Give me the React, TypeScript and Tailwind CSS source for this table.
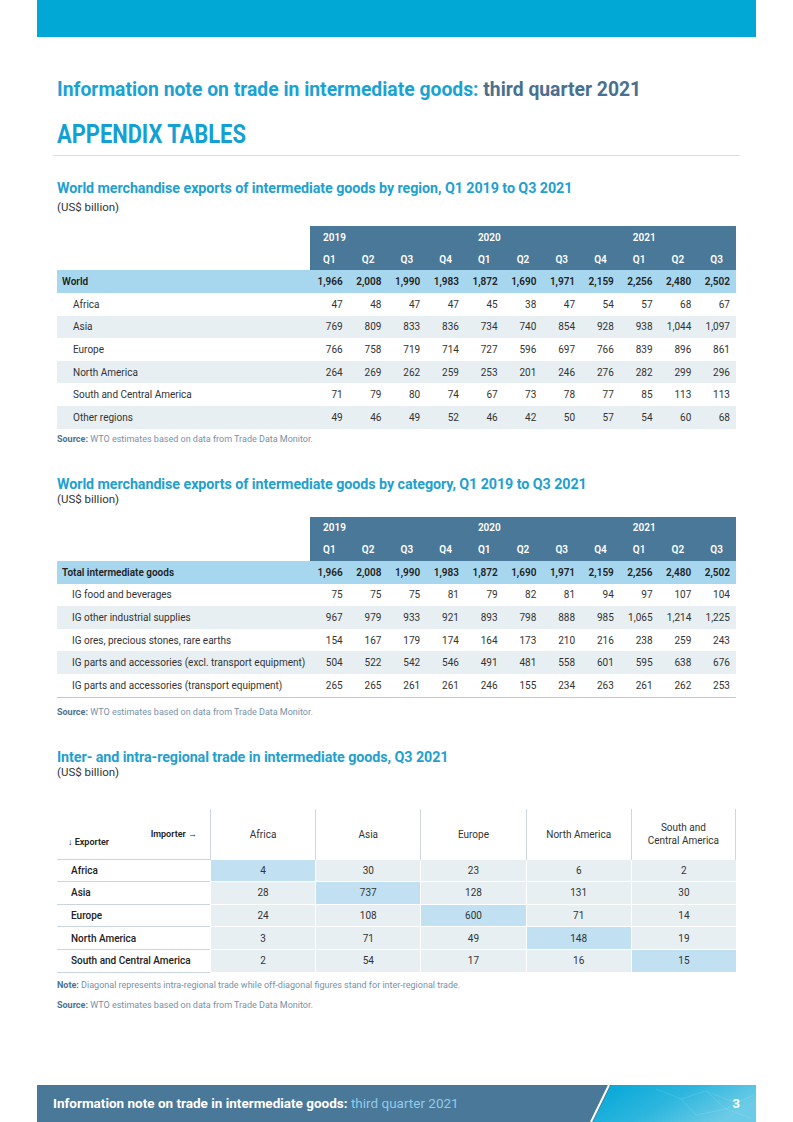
const q = ['Q1', 'Q2', 'Q3', 'Q4', 'Q1', 'Q2', 'Q3', 'Q4', 'Q1', 'Q2', 'Q3'];

const regionRows: [string, string[]][] = [
  ['Africa', ['47', '48', '47', '47', '45', '38', '47', '54', '57', '68', '67']],
  ['Asia', ['769', '809', '833', '836', '734', '740', '854', '928', '938', '1,044', '1,097']],
  ['Europe', ['766', '758', '719', '714', '727', '596', '697', '766', '839', '896', '861']],
  ['North America', ['264', '269', '262', '259', '253', '201', '246', '276', '282', '299', '296']],
  ['South and Central America', ['71', '79', '80', '74', '67', '73', '78', '77', '85', '113', '113']],
  ['Other regions', ['49', '46', '49', '52', '46', '42', '50', '57', '54', '60', '68']],
];

const categoryRows: [string, string[]][] = [
  ['IG food and beverages', ['75', '75', '75', '81', '79', '82', '81', '94', '97', '107', '104']],
  ['IG other industrial supplies', ['967', '979', '933', '921', '893', '798', '888', '985', '1,065', '1,214', '1,225']],
  ['IG ores, precious stones, rare earths', ['154', '167', '179', '174', '164', '173', '210', '216', '238', '259', '243']],
  ['IG parts and accessories (excl. transport equipment)', ['504', '522', '542', '546', '491', '481', '558', '601', '595', '638', '676']],
  ['IG parts and accessories (transport equipment)', ['265', '265', '261', '261', '246', '155', '234', '263', '261', '262', '253']],
];

const totals = ['1,966', '2,008', '1,990', '1,983', '1,872', '1,690', '1,971', '2,159', '2,256', '2,480', '2,502'];

const matrixCols = ['Africa', 'Asia', 'Europe', 'North America', 'South and Central America'];
const matrixRows: [string, string[]][] = [
  ['Africa', ['4', '30', '23', '6', '2']],
  ['Asia', ['28', '737', '128', '131', '30']],
  ['Europe', ['24', '108', '600', '71', '14']],
  ['North America', ['3', '71', '49', '148', '19']],
  ['South and Central America', ['2', '54', '17', '16', '15']],
];

function SectionTitle({ title, gap }: { title: string; gap: string }) {
  return (
    <div>
      <h3 className="text-[14.3px] leading-[18px] font-bold tracking-[-0.005em] text-[#1f9fd2]">{title}</h3>
      <p className={`${gap} text-[11.5px] leading-[15px] text-[#333]`}>(US$ billion)</p>
    </div>
  );
}

function Source({ note }: { note?: boolean }) {
  return (
    <p className="text-[9px] leading-[12px] text-[#7592aa]">
      <span className="font-bold text-[#4b7393]">{note ? 'Note:' : 'Source:'}</span>{' '}
      {note
        ? 'Diagonal represents intra-regional trade while off-diagonal figures stand for inter-regional trade.'
        : 'WTO estimates based on data from Trade Data Monitor.'}
    </p>
  );
}

function QuarterTable({
  totalLabel,
  rows,
  indent,
  bottomLine,
}: {
  totalLabel: string;
  rows: [string, string[]][];
  indent: string;
  bottomLine?: boolean;
}) {
  const grid = 'grid grid-cols-[253px_repeat(11,1fr)]';
  return (
    <div className={`text-[10px] text-[#333] ${bottomLine ? 'border-b border-[#b9cad6]' : ''}`}>
      {/* header */}
      <div className={`${grid} h-[22px] items-center`}>
        <div />
        <div className="col-span-4 h-full bg-[#4a7898] pl-[13px] flex items-center font-semibold text-white">2019</div>
        <div className="col-span-4 h-full bg-[#4a7898] pl-[13px] flex items-center font-semibold text-white">2020</div>
        <div className="col-span-3 h-full bg-[#4a7898] pl-[13px] flex items-center font-semibold text-white">2021</div>
      </div>
      <div className={`${grid} h-[22px]`}>
        <div />
        {q.map((x, i) => (
          <div key={i} className="bg-[#4a7898] flex items-center justify-center font-semibold text-white">
            {x}
          </div>
        ))}
      </div>
      <div className={`${grid} h-[23px] items-center bg-[#a7d7ee] font-semibold text-[#222]`}>
        <div className="pl-[5px]">{totalLabel}</div>
        {totals.map((v, i) => (
          <div key={i} className="text-right pr-[6px]">
            {v}
          </div>
        ))}
      </div>
      {rows.map(([label, vals], r) => (
        <div key={label} className={`${grid} h-[22.6px] items-center ${r % 2 === 1 ? 'bg-[#e8eff2]' : 'bg-white'}`}>
          <div className={indent}>{label}</div>
          {vals.map((v, i) => (
            <div key={i} className="text-right pr-[6px]">
              {v}
            </div>
          ))}
        </div>
      ))}
    </div>
  );
}

function MatrixTable() {
  const grid = 'grid grid-cols-[153px_repeat(5,1fr)]';
  return (
    <div className="text-[10px] text-[#333]">
      <div className={`${grid} h-[51px]`}>
        <div className="flex justify-between pl-[11px] pr-[13px] pt-[19px] border-b border-[#c9d5dc] font-semibold text-[9px] text-[#222]">
          <span className="mt-[8px]">↓ Exporter</span>
          <span>Importer →</span>
        </div>
        {matrixCols.map((c, i) => (
          <div
            key={c}
            className={`flex items-center justify-center text-center leading-[13px] px-[6px] border-l border-[#cdd7dd] ${
              i === matrixCols.length - 1 ? 'border-r' : ''
            }`}
          >
            {c === 'South and Central America' ? (
              <span>
                South and
                <br />
                Central America
              </span>
            ) : (
              c
            )}
          </div>
        ))}
      </div>
      {matrixRows.map(([label, vals], r) => (
        <div key={label} className={`${grid} h-[22.6px]`}>
          <div className="flex items-center pl-[14px] border-b border-[#c9d5dc] font-medium text-[#222]">{label}</div>
          {vals.map((v, i) => (
            <div
              key={i}
              className={`flex items-center justify-center border-l border-b border-white ${
                i === r ? 'bg-[#c1e1f2]' : 'bg-[#e8eff2]'
              }`}
            >
              {v}
            </div>
          ))}
        </div>
      ))}
    </div>
  );
}

export default function App() {
  return (
    <div className="w-[793px] h-[1122px] flex flex-col bg-white font-['Roboto',sans-serif]">
      <div className="mx-[37px] h-[37px] bg-[#01a8d6]" />

      <div className="px-[57px]">
        <h1 className="mt-[40px] h-[24px] text-[21px] leading-[24px] font-bold whitespace-nowrap">
          <span className="inline-block origin-left scale-x-[0.92] text-[#1aa2d4]">
            Information note on trade in intermediate goods: <span className="text-[#4a7090]">third quarter 2021</span>
          </span>
        </h1>
      </div>

      <div className="mx-[53px] mt-[20px] border-b border-[#c4e5f4] pb-[6px] pl-[4px]">
        <h2 className="h-[28px] text-[25px] leading-[28px] font-bold whitespace-nowrap">
          <span className="inline-block origin-left scale-x-[0.875] text-[#14a0d3]">APPENDIX TABLES</span>
        </h2>
      </div>

      <div className="px-[57px]">
        <div className="mt-[23px]">
          <SectionTitle gap="mt-[3px]" title="World merchandise exports of intermediate goods by region, Q1 2019 to Q3 2021" />
        </div>
        <div className="mt-[11px]">
          <QuarterTable totalLabel="World" rows={regionRows} indent="pl-[16px]" />
        </div>
        <div className="mt-[4px]">
          <Source />
        </div>

        <div className="mt-[30px]">
          <SectionTitle gap="mt-[-1px]" title="World merchandise exports of intermediate goods by category, Q1 2019 to Q3 2021" />
        </div>
        <div className="mt-[10px]">
          <QuarterTable totalLabel="Total intermediate goods" rows={categoryRows} indent="pl-[15px]" bottomLine />
        </div>
        <div className="mt-[8px]">
          <Source />
        </div>

        <div className="mt-[30px]">
          <SectionTitle gap="mt-[-1px]" title="Inter- and intra-regional trade in intermediate goods, Q3 2021" />
        </div>
        <div className="mt-[29px]">
          <MatrixTable />
        </div>
        <div className="mt-[6px]">
          <Source note />
        </div>
        <div className="mt-[8px]">
          <Source />
        </div>
      </div>

      <footer className="mt-auto mb-0 mx-[37px] h-[37px] bg-[#4a7898] flex items-center">
        <div className="flex-1 pl-[16px] text-[13.5px] font-bold text-white whitespace-nowrap">
          Information note on trade in intermediate goods:{' '}
          <span className="font-normal text-[#8fcbea]">third quarter 2021</span>
        </div>
        <div className="relative w-[170px] h-full">
          <svg className="absolute inset-0" width="170" height="37" viewBox="0 0 170 37">
            <defs>
              <linearGradient id="ft" x1="0" y1="0" x2="1" y2="0.4">
                <stop offset="0" stopColor="#00a6d6" />
                <stop offset="0.55" stopColor="#2db6de" />
                <stop offset="1" stopColor="#6ccbe6" />
              </linearGradient>
            </defs>
            <polygon points="25,0 170,0 170,37 7,37" fill="url(#ft)" />
            <line x1="23" y1="0" x2="5" y2="37" stroke="#ffffff" strokeWidth="2" />
            <g stroke="#ffffff" strokeOpacity="0.18" strokeWidth="0.6" fill="none">
              <path d="M70 4 L95 14 L120 6 L150 18 L168 10" />
              <path d="M95 14 L110 30 L140 24 L150 18" />
              <path d="M120 6 L140 24 L165 33" />
            </g>
          </svg>
          <span className="absolute right-[16px] top-1/2 -translate-y-1/2 text-[13px] font-bold text-white">3</span>
        </div>
      </footer>
    </div>
  );
}
